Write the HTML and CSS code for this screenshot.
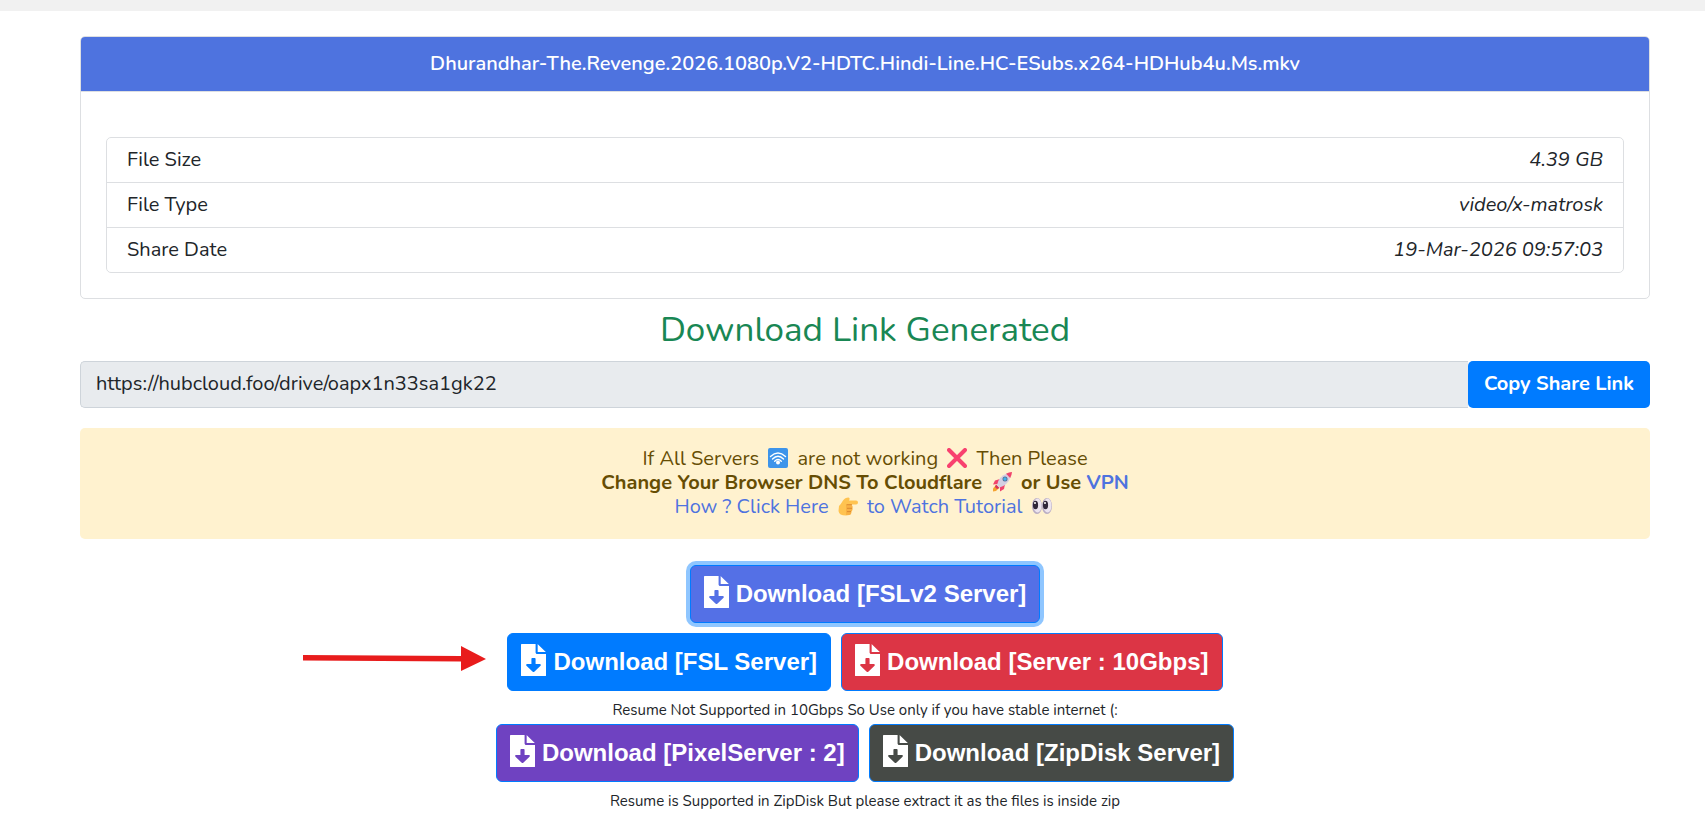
FILE: index.html
```
<!DOCTYPE html>
<html lang="en">
<head>
  <meta charset="UTF-8">
  <meta name="viewport" content="width=device-width, initial-scale=1.0">
  <title>Dhurandhar-The.Revenge.2026.1080p.V2-HDTC.Hindi-Line.HC-ESubs.x264-HDHub4u.Ms.mkv</title>
  <link rel="stylesheet" href="styles.css">
</head>
<body>
  <svg class="sprite" aria-hidden="true">
    <symbol id="file-download" viewBox="0 0 384 512" preserveAspectRatio="none">
      <path d="M224 136V0H10Q0 0 0 10v492q0 10 10 10h364q10 0 10-10V160H248c-13 0-24-11-24-24zm76 211l-96 96c-7 7-17 7-24 0l-96-96C73 337 81 320 95 320H160v-80c0-9 7-16 16-16h32c9 0 16 7 16 16v80h65c14 0 21 17 11 27zM377 122L262 7c-2-4-4-7-6-7v128h128c0-2-3-4-7-6z"/>
    </symbol>
  </svg>

  <div class="topbar"></div>

  <main class="container">
    <div class="card">
      <div class="card-header">Dhurandhar-The.Revenge.2026.1080p.V2-HDTC.Hindi-Line.HC-ESubs.x264-HDHub4u.Ms.mkv</div>
      <div class="card-body">
        <ul class="list-group">
          <li>File Size <i>4.39 GB</i></li>
          <li>File Type <i>video/x-matrosk</i></li>
          <li>Share Date <i>19-Mar-2026 09:57:03</i></li>
        </ul>
      </div>
    </div>

    <h2>Download Link Generated</h2>

    <div class="input-group">
      <input type="text" id="share-link" value="https://hubcloud.foo/drive/oapx1n33sa1gk22" aria-label="Share link" readonly>
      <button type="button" id="copy" class="btn-copy">Copy Share Link</button>
    </div>

    <div class="alert">
      If All Servers
      <svg class="emoji" viewBox="0 0 20 20" aria-hidden="true">
        <rect width="20" height="20" rx="2" fill="#3d94ea"/>
        <g fill="none" stroke="#fff" stroke-width="1.4" stroke-linecap="round">
          <path d="M2.5 8.500Q10 1.500 17.500 8.500"/>
          <path d="M4.500 11Q10 5.500 15.500 11"/>
          <path d="M6.700 13.200Q10 9.800 13.300 13.200"/>
        </g>
        <circle cx="10" cy="14.500" r="2" fill="#fff"/>
      </svg>
      are not working
      <svg class="emoji" viewBox="0 0 20 20" aria-hidden="true">
        <path d="M2 2L18 18M18 2L2 18" stroke="#f8416f" stroke-width="4" stroke-linecap="round"/>
      </svg>
      Then Please<br>
      <b>Change Your Browser DNS To Cloudflare
      <svg class="emoji" viewBox="0 0 20 20" aria-hidden="true">
        <path d="M4 13L1 16.500V19.500L4 19L7 16z" fill="#f5a331"/>
        <path d="M8 7L3 8.500L1 12.500L6 12zM13 12L12 17L8 19.500L8 14z" fill="#f0436c"/>
        <path d="M5 13Q7 4 15 1.500L18.500 5Q16 13 7.500 15.500z" fill="#d5cfe2"/>
        <path d="M14 1.800Q17 .300 20 0Q19.700 3.500 18.200 6z" fill="#f0436c"/>
        <path d="M4 12.500L7.500 16L5 17L3 15z" fill="#d6315c"/>
        <circle cx="13" cy="7" r="2.500" fill="#5b6a8c"/>
        <circle cx="13" cy="7" r="1.700" fill="#40b4ee"/>
      </svg>
      or Use <a href="#">VPN</a></b><br>
      <a href="#">How ? Click Here
      <svg class="emoji" viewBox="0 0 20 20" aria-hidden="true">
        <path d="M1 10Q3 8 5 4.500Q7 1.500 10.500 1.500Q12.500 2 11 4.500H18Q20 4.700 20 6.500T18 8.500H13V17Q12 19.500 8 19.500Q1 19.500 .500 15z" fill="#ffc350"/>
        <path d="M8 9H13.500Q15 9.500 14.500 12Q15 14 13.500 15.500Q13.500 19 11 19H8" fill="#f8b143"/>
        <path d="M8.500 8.700H14M9 12.300H14M9 15.600H13" stroke="#dc8a31" fill="none"/>
      </svg>
      to Watch Tutorial
      <svg class="emoji" viewBox="0 0 20 20" aria-hidden="true">
        <ellipse cx="5" cy="10" rx="5" ry="8" fill="#b9adc4"/>
        <ellipse cx="15" cy="10" rx="5" ry="8" fill="#b9adc4"/>
        <ellipse cx="5.500" cy="9.500" rx="4" ry="7" fill="#ece4ee"/>
        <ellipse cx="15.500" cy="9.500" rx="4" ry="7" fill="#ece4ee"/>
        <ellipse cx="3.500" cy="9" rx="2.600" ry="4.300" fill="#30273a"/>
        <ellipse cx="13.500" cy="9" rx="2.600" ry="4.300" fill="#30273a"/>
        <circle cx="3" cy="7" r="1" fill="#fff"/>
        <circle cx="13" cy="7" r="1" fill="#fff"/>
      </svg></a>
    </div>

    <div class="downloads">
      <div class="row">
        <a href="#" class="btn btn-fslv2"><svg class="icon"><use href="#file-download"/></svg>Download [FSLv2 Server]</a>
      </div>
      <div class="row">
        <div class="marked">
          <svg class="arrow" viewBox="0 0 183 26" aria-hidden="true">
            <path d="M0 9L158 10V0L183 13L158 25V15.500L0 14.500z" fill="#e81c1c"/>
          </svg>
          <a href="#" class="btn btn-fsl"><svg class="icon"><use href="#file-download"/></svg>Download [FSL Server]</a>
        </div>
        <a href="#" class="btn btn-10gbps"><svg class="icon"><use href="#file-download"/></svg>Download [Server : 10Gbps]</a>
      </div>
      <p>Resume Not Supported in 10Gbps So Use only if you have stable internet (:</p>
      <div class="row">
        <a href="#" class="btn btn-pixel"><svg class="icon"><use href="#file-download"/></svg>Download [PixelServer : 2]</a>
        <a href="#" class="btn btn-zipdisk"><svg class="icon"><use href="#file-download"/></svg>Download [ZipDisk Server]</a>
      </div>
      <p>Resume is Supported in ZipDisk But please extract it as the files is inside zip</p>
    </div>
  </main>

  <script>
    document.getElementById('copy').addEventListener('click', () => {
      const link = document.getElementById('share-link');
      link.select();
      document.execCommand('copy');
    });
  </script>
</body>
</html>
```

FILE: styles.css
```
:root {
  --primary: #4e73df;
  --blue: #007bff;
  --border: #dddfe2;
  --text: #212529;
}

* {
  box-sizing: border-box;
}

body {
  margin: 0;
  background: #fff;
  color: var(--text);
  font-family: Nunito, Lato, sans-serif;
  font-size: 20px;
  line-height: 24px;
}

a {
  color: var(--primary);
  text-decoration: none;
}

.sprite {
  position: absolute;
  width: 0;
  height: 0;
}

.topbar {
  height: 11px;
  background: #f1f1f1;
}

.container {
  padding: 25px 55px 0 80px;
}

.card {
  border: 1px solid var(--border);
  border-radius: 5px;
  overflow: hidden;
}

.card-header {
  padding: 12px 20px;
  border-bottom: 1px solid var(--border);
  background: var(--primary);
  color: #fff;
  font-weight: 600;
  line-height: 30px;
  text-align: center;
}

.card-body {
  padding: 45px 25px 25px;
}

.list-group {
  margin: 0;
  padding: 0;
  border: 1px solid var(--border);
  border-radius: 5px;
  list-style: none;
}

.list-group li {
  display: flex;
  justify-content: space-between;
  padding: 10px 20px;
}

.list-group li + li {
  border-top: 1px solid var(--border);
}

h2 {
  margin: 10px 0;
  color: #198754;
  font-size: 35px;
  font-weight: 400;
  line-height: 42px;
  text-align: center;
}

.input-group {
  display: flex;
  height: 47px;
  margin-bottom: 20px;
}

.input-group input {
  flex: 1;
  min-width: 0;
  padding: 0 15px 2px;
  border: 1px solid #ced4da;
  border-right: 0;
  border-radius: 5px 0 0 5px;
  background: #e8ebee;
  color: var(--text);
  font-family: inherit;
  font-size: 20px;
}

.btn-copy {
  padding: 0 16px 2px;
  border: 0;
  border-radius: 5px;
  background: var(--blue);
  color: #fff;
  font-family: inherit;
  font-size: 20px;
  font-weight: 700;
  cursor: pointer;
}

.alert {
  padding: 19px 20px 20px;
  border-radius: 5px;
  background: #fff2cf;
  color: #664d03;
  text-align: center;
}

.emoji {
  width: 20px;
  height: 20px;
  margin: 0 4px;
  vertical-align: -3px;
}

.downloads {
  margin-top: 26px;
  text-align: center;
}

.row {
  display: flex;
  justify-content: center;
  gap: 10px;
}

.row + .row {
  margin-top: 10px;
}

.downloads p {
  margin: 0;
  padding-top: 5px;
  font-size: 15px;
  line-height: 28px;
}

.btn {
  display: flex;
  align-items: center;
  gap: 7px;
  height: 58px;
  padding: 0 13px;
  border: 1px solid var(--blue);
  border-radius: 6px;
  color: #fff;
  font-family: "Liberation Sans", Arial, sans-serif;
  font-size: 24px;
  font-weight: 700;
}

.icon {
  width: 25px;
  height: 32px;
  margin-bottom: 4px;
  fill: #fff;
}

.btn-fslv2 {
  background: #5470e6;
  box-shadow: 0 0 0 4px #8fc6ff;
}

.btn-fsl {
  background: var(--blue);
}

.btn-10gbps {
  background: #dc3545;
}

.btn-pixel {
  background: #6f42c1;
}

.btn-zipdisk {
  background: #464a46;
}

/* red arrow pointing at the recommended server */
.marked {
  position: relative;
}

.arrow {
  position: absolute;
  top: 13px;
  right: calc(100% + 21px);
  width: 183px;
  height: 26px;
}
```
